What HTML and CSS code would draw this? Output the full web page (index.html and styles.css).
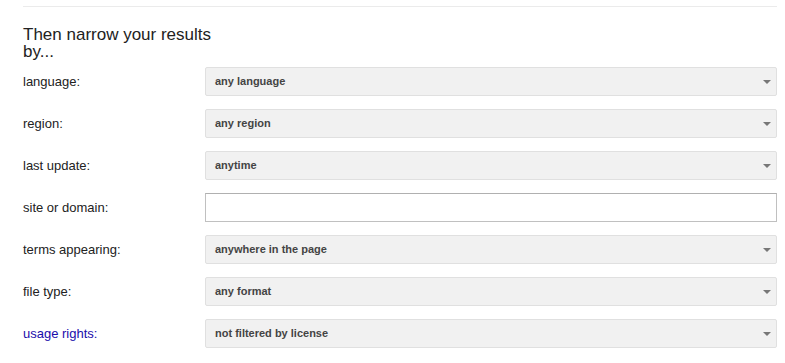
FILE: index.html
```html
<!DOCTYPE html>
<html lang="en">
<head>
  <meta charset="UTF-8">
  <title>Advanced Search</title>
  <link rel="stylesheet" href="styles.css">
</head>
<body>
  <div class="page">
    <hr class="rule">
    <h2 class="heading">Then narrow your results by...</h2>

    <div class="row">
      <span class="label">language:</span>
      <div class="select">any language<span class="arrow"></span></div>
    </div>
    <div class="row">
      <span class="label">region:</span>
      <div class="select">any region<span class="arrow"></span></div>
    </div>
    <div class="row">
      <span class="label">last update:</span>
      <div class="select">anytime<span class="arrow"></span></div>
    </div>
    <div class="row">
      <span class="label">site or domain:</span>
      <div class="textbox"></div>
    </div>
    <div class="row">
      <span class="label">terms appearing:</span>
      <div class="select">anywhere in the page<span class="arrow"></span></div>
    </div>
    <div class="row">
      <span class="label">file type:</span>
      <div class="select">any format<span class="arrow"></span></div>
    </div>
    <div class="row">
      <a class="label link">usage rights:</a>
      <div class="select">not filtered by license<span class="arrow"></span></div>
    </div>
  </div>
</body>
</html>
```

FILE: styles.css
```css
body {
  margin: 0;
  font-family: Arial, "Liberation Sans", sans-serif;
  color: #222;
  background: #fff;
}

.page {
  padding: 6px 8px 0 23px;
}

.rule {
  margin: 0;
  border: 0;
  border-top: 1px solid #ebebeb;
  height: 0;
}

.heading {
  font-size: 17px;
  font-weight: normal;
  line-height: 17px;
  width: 200px;
  margin: 19px 0 0;
  color: #222;
}

.row {
  display: flex;
  align-items: center;
  height: 29px;
  margin-top: 13px;
}

.heading + .row {
  margin-top: 7px;
}

.label {
  width: 182px;
  font-size: 13px;
  color: #222;
}

.link {
  color: #1a0dab;
}

.select {
  position: relative;
  flex: 1;
  height: 27px;
  line-height: 27px;
  box-sizing: content-box;
  border: 1px solid #e0e0e0;
  border-radius: 2px;
  background: #f1f1f1;
  padding-left: 9px;
  font-size: 11px;
  font-weight: bold;
  color: #444;
}

.arrow {
  position: absolute;
  right: 5px;
  top: 12px;
  border-left: 4px solid transparent;
  border-right: 4px solid transparent;
  border-top: 4px solid #777;
}

.textbox {
  flex: 1;
  height: 27px;
  border: 1px solid #c0c0c0;
  border-top-color: #b0b0b0;
  background: #fff;
}
```
